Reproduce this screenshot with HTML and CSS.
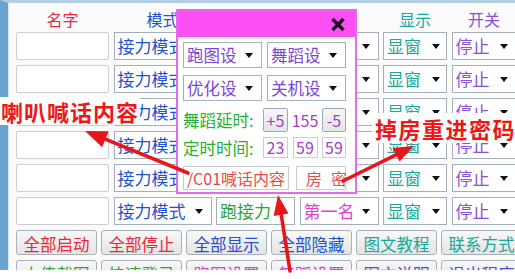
FILE: index.html
```html
<!DOCTYPE html>
<html lang="zh-CN">
<head>
<meta charset="utf-8">
<title>控制面板</title>
<link rel="stylesheet" href="styles.css">
</head>
<body>
<div class="window">
  <div class="grid head">
    <div class="h red">名字</div>
    <div class="h blue">模式</div>
    <div></div>
    <div></div>
    <div class="h teal">显示</div>
    <div class="h purple">开关</div>
  </div>
  <div class="grid rows">
    <div class="tb"></div>
    <div class="cb blue"><span>接力模式</span><i class="arr"></i></div>
    <div class="cb green"><span>跑接力</span><i class="arr"></i></div>
    <div class="cb pink"><span>第一名</span><i class="arr"></i></div>
    <div class="cb teal c5"><span>显窗</span><i class="arr"></i></div>
    <div class="cb purple"><span>停止</span><i class="arr"></i></div>

    <div class="tb"></div>
    <div class="cb blue"><span>接力模式</span><i class="arr"></i></div>
    <div class="cb green"><span>跑接力</span><i class="arr"></i></div>
    <div class="cb pink"><span>第一名</span><i class="arr"></i></div>
    <div class="cb teal c5"><span>显窗</span><i class="arr"></i></div>
    <div class="cb purple"><span>停止</span><i class="arr"></i></div>

    <div class="tb"></div>
    <div class="cb blue"><span>接力模式</span><i class="arr"></i></div>
    <div class="cb green"><span>跑接力</span><i class="arr"></i></div>
    <div class="cb pink"><span>第一名</span><i class="arr"></i></div>
    <div class="cb teal c5"><span>显窗</span><i class="arr"></i></div>
    <div class="cb purple"><span>停止</span><i class="arr"></i></div>

    <div class="tb"></div>
    <div class="cb blue"><span>接力模式</span><i class="arr"></i></div>
    <div class="cb green"><span>跑接力</span><i class="arr"></i></div>
    <div class="cb pink"><span>第一名</span><i class="arr"></i></div>
    <div class="cb teal c5"><span>显窗</span><i class="arr"></i></div>
    <div class="cb purple"><span>停止</span><i class="arr"></i></div>

    <div class="tb"></div>
    <div class="cb blue"><span>接力模式</span><i class="arr"></i></div>
    <div class="cb green"><span>跑接力</span><i class="arr"></i></div>
    <div class="cb pink"><span>第一名</span><i class="arr"></i></div>
    <div class="cb teal c5"><span>显窗</span><i class="arr"></i></div>
    <div class="cb purple"><span>停止</span><i class="arr"></i></div>

    <div class="tb"></div>
    <div class="cb blue"><span>接力模式</span><i class="arr"></i></div>
    <div class="cb green"><span>跑接力</span><i class="arr"></i></div>
    <div class="cb pink"><span>第一名</span><i class="arr"></i></div>
    <div class="cb teal c5"><span>显窗</span><i class="arr"></i></div>
    <div class="cb purple"><span>停止</span><i class="arr"></i></div>
  </div>
  <div class="btns">
    <div class="btn red">全部启动</div>
    <div class="btn red">全部停止</div>
    <div class="btn blue">全部显示</div>
    <div class="btn blue">全部隐藏</div>
    <div class="btn teal">图文教程</div>
    <div class="btn teal">联系方式</div>
    <div class="btn green">上传截图</div>
    <div class="btn green">快速登录</div>
    <div class="btn magenta">跑图设置</div>
    <div class="btn magenta">舞蹈设置</div>
    <div class="btn indigo">图文说明</div>
    <div class="btn indigo">退出程序</div>
  </div>
</div>

<div class="popup">
  <div class="ph">
    <svg class="close" width="16" height="15" viewBox="0 0 16 15"><path d="M2.5 2 L13.5 13 M13.5 2 L2.5 13" stroke="#1c0c1c" stroke-width="3.4" fill="none"/></svg>
  </div>
  <div class="pbody">
    <div class="prow ra">
      <div class="pc"><span>跑图设</span><i class="arr"></i></div>
      <div class="pc"><span>舞蹈设</span><i class="arr"></i></div>
    </div>
    <div class="prow rb">
      <div class="pc"><span>优化设</span><i class="arr"></i></div>
      <div class="pc"><span>关机设</span><i class="arr"></i></div>
    </div>
    <div class="prow rc">
      <div class="plabel">舞蹈延时:</div>
      <div class="pbtn">+5</div>
      <div class="pnum">155</div>
      <div class="pbtn">-5</div>
    </div>
    <div class="prow rd">
      <div class="plabel">定时时间:</div>
      <div class="pbox">23</div>
      <div class="pbox">59</div>
      <div class="pbox">59</div>
    </div>
    <div class="prow re">
      <div class="pin wide">/C01喊话内容</div>
      <div class="pin pw">房密</div>
    </div>
  </div>
</div>

<div class="note n1">喇叭喊话内容</div>
<div class="note n2">掉房重进密码</div>

<svg class="arrows" width="515" height="279" viewBox="0 0 515 279">
  <g stroke="#e8161b" stroke-width="3.6" fill="none" stroke-linecap="round">
    <line x1="188" y1="173" x2="104" y2="138.7"/>
    <line x1="343" y1="181" x2="397" y2="154.3"/>
    <line x1="290" y1="271" x2="281" y2="213"/>
  </g>
  <g fill="#e8161b">
    <polygon points="85,131 108.6,131.2 102.2,147.2"/>
    <polygon points="414,146 399.6,161.6 392.6,148"/>
    <polygon points="278,195 288.5,213.6 273.6,216"/>
  </g>
</svg>
</body>
</html>
```
FILE: styles.css
```css
* { box-sizing: border-box; margin: 0; padding: 0; }
html, body { width: 515px; height: 279px; overflow: hidden; background: #ffffff; }
body { position: relative; font-family: "Noto Sans CJK SC", "Noto Sans", sans-serif; }

.red { color: #e6283a; }
.blue { color: #2152d0; }
.teal { color: #18a89e; }
.purple { color: #8a4fdc; }
.green { color: #2fa334; }
.pink { color: #e040d4; }
.magenta { color: #d83cd6; }
.indigo { color: #4c4cd2; }

.window {
  height: 270px;
  border-top: 3px solid #b1cde4;
  border-left: 8px solid #6aa3cf;
  box-shadow: inset 1px 0 0 #d6e6f2;
  padding: 6px 0 0 8px;
  background: #fbfbfb;
  overflow: hidden;
}

.grid {
  display: grid;
  grid-template-columns: 93px 98px 79px 79px 64px 65px;
  column-gap: 4.5px;
  width: max-content;
}
.head { height: 21px; margin-bottom: 2px; align-items: center; }
.h { text-align: center; font-size: 16px; line-height: 21px; }

.rows { grid-template-rows: repeat(6, 28px); row-gap: 5px; }
.tb { background: #fff; border: 1px solid #cbcfd4; border-radius: 2px; }
.cb {
  background: #fff;
  border: 1px solid #a3afbb;
  display: flex;
  align-items: center;
  justify-content: space-between;
  padding: 0 8px 0 3px;
  font-size: 17px;
  line-height: 20px;
  white-space: nowrap;
  overflow: hidden;
}
.cb.c5 { padding-right: 6px; }
.arr {
  flex: none;
  width: 0;
  height: 0;
  border-left: 4.5px solid transparent;
  border-right: 4.5px solid transparent;
  border-top: 5px solid #111;
}

.btns {
  display: grid;
  grid-template-columns: repeat(6, 81px);
  grid-auto-rows: 25px;
  column-gap: 4px;
  row-gap: 5px;
  margin-top: 5px;
  width: max-content;
}
.btn {
  border: 1px solid #a8b1ba;
  border-radius: 3px;
  background: linear-gradient(#f8f8f8, #e4e4e4);
  font-size: 16.5px;
  padding-top: 3px;
  line-height: 20px;
  text-align: center;
  white-space: nowrap;
}

/* popup dialog */
.popup {
  position: absolute;
  left: 176px;
  top: 9px;
  width: 181px;
  height: 185px;
  border: 2px solid #e36be9;
  background: #fff;
}
.ph {
  height: 26px;
  background: #fb4ff3;
  display: flex;
  align-items: center;
  justify-content: flex-end;
  padding-right: 9px;
}
.close { display: block; }
.pbody { padding: 5px 0 0 5px; }
.prow { display: flex; }
.ra { height: 26px; gap: 5px; }
.rb { height: 26px; gap: 5px; margin-top: 7px; }
.rc { height: 24px; margin-top: 7px; }
.rd { height: 21px; margin-top: 5px; gap: 4.5px; }
.re { height: 24px; margin-top: 8px; gap: 7px; }

.pc {
  width: 79px;
  background: #fff;
  border: 1px solid #a3afbb;
  display: flex;
  align-items: center;
  justify-content: space-between;
  padding: 0 8px 0 3px;
  font-size: 16.5px;
  line-height: 20px;
  color: #7b45d8;
  white-space: nowrap;
}
.plabel {
  width: 80px;
  flex: none;
  color: #23b02f;
  font-size: 16.5px;
  line-height: 22px;
  white-space: nowrap;
  align-self: center;
}
.rd .plabel { margin-right: -4.5px; }
.pbtn {
  width: 24px;
  border: 1px solid #9fa9b3;
  border-radius: 2px;
  background: linear-gradient(#f6f6f6, #e5e5e5);
  color: #9b3fc6;
  font-size: 16px;
  line-height: 22px;
  text-align: center;
}
.pbtn:nth-child(2) { width: 25px; }
.pnum {
  width: 34px;
  text-align: center;
  color: #a040c0;
  font-size: 16px;
  line-height: 24px;
}
.pbox {
  width: 25px;
  border: 1px solid #c9ced3;
  background: #fff;
  text-align: center;
  color: #a040c8;
  font-size: 16px;
  line-height: 19px;
}
.pbox:last-child { width: 24px; }
.pin {
  border: 1px solid #c8cdd2;
  background: #fff;
  color: #e44a4a;
  font-size: 16px;
  line-height: 22px;
  text-align: center;
  white-space: nowrap;
}
.wide { width: 106px; }
.pw { width: 50px; letter-spacing: 9px; padding-left: 9px; color: #e05050; }

/* annotations */
.note {
  position: absolute;
  background: #fff;
  color: #f01616;
  font-weight: 700;
  font-size: 22px;
  white-space: nowrap;
}
.n1 { left: 0; top: 97px; width: 140px; height: 28px; line-height: 28px; padding-left: 1px; letter-spacing: 1px; }
.n2 { left: 372px; top: 113px; width: 143px; height: 30px; line-height: 30px; padding-left: 3px; letter-spacing: 1.5px; }

.arrows { position: absolute; left: 0; top: 0; pointer-events: none; }
```
